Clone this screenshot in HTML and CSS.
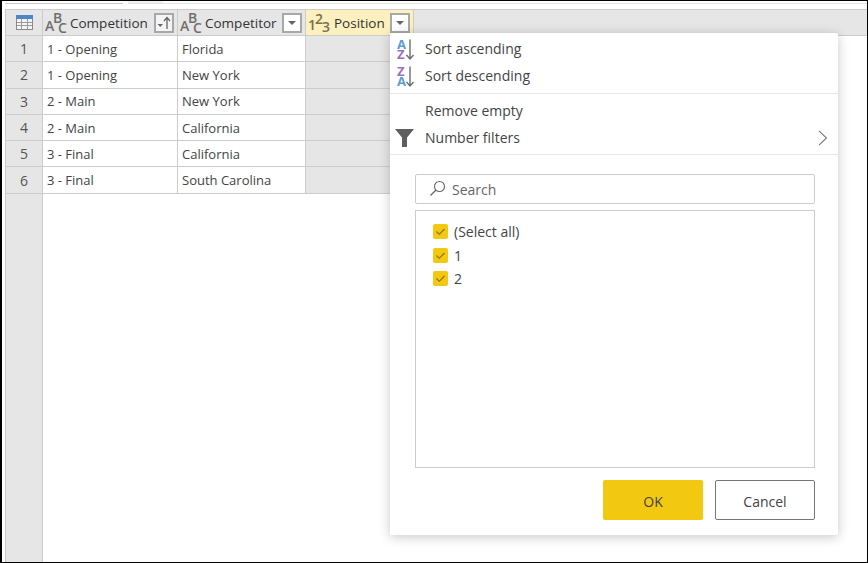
FILE: index.html
```html
<!DOCTYPE html>
<html lang="en">
  <head>
    <meta charset="UTF-8" />
    <meta name="viewport" content="width=device-width, initial-scale=1.0" />
    <title>Filter Position</title>
    <link rel="stylesheet" href="styles.css">
  </head>
  <body>
    <div class="frame">
      <div class="tabs">
        <div class="tab tab-first"></div>
        <div class="tab tab-rest"><div class="tab-fill"></div></div>
      </div>
      <div class="sheet">
        <div class="gutter">
          <div class="corner">
            <svg width="17" height="15" viewBox="0 0 17 15">
              <rect x="0.5" y="0.5" width="16" height="14" fill="#f4f4f4" stroke="#8a8a8a"/>
              <rect x="0" y="0" width="17" height="4" fill="#4a86c8"/>
              <path d="M1 7.5H16M1 10.5H16M5.5 4V14M11.5 4V14" stroke="#9a9a9a" fill="none"/>
            </svg>
          </div>
          <div class="num">1</div>
          <div class="num">2</div>
          <div class="num">3</div>
          <div class="num">4</div>
          <div class="num">5</div>
          <div class="num">6</div>
        </div>
        <div class="data">
          <div class="head">
            <div class="hcell col-a">
              <svg class="type-icon" width="22" height="24" viewBox="0 0 22 24">
                <text x="0" y="20" class="glyph">A</text>
                <text x="8" y="12" class="glyph">B</text>
                <text x="13" y="22" class="glyph">C</text>
              </svg>
              <span class="hname">Competition</span>
              <button class="hbtn hbtn-a">
                <svg width="16" height="16" viewBox="0 0 16 16">
                  <path d="M1.5 9H7L4.25 12Z" fill="#666"/>
                  <path d="M11 14V3M8 6L11 2.5L14 6" stroke="#666" stroke-width="1.3" fill="none"/>
                </svg>
              </button>
            </div>
            <div class="hcell col-b">
              <svg class="type-icon" width="22" height="24" viewBox="0 0 22 24">
                <text x="0" y="20" class="glyph">A</text>
                <text x="8" y="12" class="glyph">B</text>
                <text x="13" y="22" class="glyph">C</text>
              </svg>
              <span class="hname">Competitor</span>
              <button class="hbtn"><span class="caret"></span></button>
            </div>
            <div class="hcell col-c">
              <svg class="type-icon" width="23" height="24" viewBox="0 0 23 24">
                <text x="0" y="19" class="glyph num-glyph">1</text>
                <text x="7" y="13" class="glyph num-glyph">2</text>
                <text x="14" y="21" class="glyph num-glyph">3</text>
              </svg>
              <span class="hname">Position</span>
              <button class="hbtn hbtn-active"><span class="caret"></span></button>
            </div>
          </div>
          <div class="row"><div class="cell col-a">1 - Opening</div><div class="cell col-b">Florida</div><div class="cell col-c"></div></div>
          <div class="row"><div class="cell col-a">1 - Opening</div><div class="cell col-b">New York</div><div class="cell col-c"></div></div>
          <div class="row"><div class="cell col-a">2 - Main</div><div class="cell col-b">New York</div><div class="cell col-c"></div></div>
          <div class="row"><div class="cell col-a">2 - Main</div><div class="cell col-b">California</div><div class="cell col-c"></div></div>
          <div class="row"><div class="cell col-a">3 - Final</div><div class="cell col-b">California</div><div class="cell col-c"></div></div>
          <div class="row"><div class="cell col-a">3 - Final</div><div class="cell col-b">South Carolina</div><div class="cell col-c"></div></div>
        </div>
      </div>

      <div class="popup">
        <div class="menu-group menu-group-top">
          <div class="menu-item">
            <svg class="menu-icon" width="24" height="24" viewBox="0 0 24 24">
              <text x="5" y="11.5" class="sort-letter blue">A</text>
              <text x="5" y="21.5" class="sort-letter purple">Z</text>
              <path d="M18 2.5V21.5M14.5 18L18 22L21.5 18" stroke="#6e6e6e" stroke-width="1.4" fill="none"/>
            </svg>
            <span>Sort ascending</span>
          </div>
          <div class="menu-item">
            <svg class="menu-icon" width="24" height="24" viewBox="0 0 24 24">
              <text x="5" y="11.5" class="sort-letter purple">Z</text>
              <text x="5" y="21.5" class="sort-letter blue">A</text>
              <path d="M18 2.5V21.5M14.5 18L18 22L21.5 18" stroke="#6e6e6e" stroke-width="1.4" fill="none"/>
            </svg>
            <span>Sort descending</span>
          </div>
        </div>
        <div class="menu-group">
          <div class="menu-item"><span class="menu-icon"></span><span>Remove empty</span></div>
          <div class="menu-item">
            <svg class="menu-icon" width="24" height="24" viewBox="0 0 24 24">
              <path d="M3 3H22L15 11.5V21H10V11.5Z" fill="#5f5f5f"/>
            </svg>
            <span>Number filters</span>
            <svg class="chevron" width="10" height="16" viewBox="0 0 10 16">
              <path d="M1 0.8L8.5 8L1 15.2" stroke="#777" stroke-width="1.1" fill="none"/>
            </svg>
          </div>
        </div>
        <div class="filter">
          <div class="search">
            <svg width="18" height="18" viewBox="0 0 18 18">
              <circle cx="10.5" cy="6.5" r="5" stroke="#666" stroke-width="1.1" fill="none"/>
              <path d="M7 10L1.5 15.5" stroke="#666" stroke-width="1.2"/>
            </svg>
            <span>Search</span>
          </div>
          <div class="values">
            <label class="value"><span class="check"><svg width="15" height="15" viewBox="0 0 15 15"><path d="M3.5 7.5L6.3 10.3L11.5 5" stroke="#8a6d10" stroke-width="1.1" fill="none"/></svg></span>(Select all)</label>
            <label class="value"><span class="check"><svg width="15" height="15" viewBox="0 0 15 15"><path d="M3.5 7.5L6.3 10.3L11.5 5" stroke="#8a6d10" stroke-width="1.1" fill="none"/></svg></span>1</label>
            <label class="value"><span class="check"><svg width="15" height="15" viewBox="0 0 15 15"><path d="M3.5 7.5L6.3 10.3L11.5 5" stroke="#8a6d10" stroke-width="1.1" fill="none"/></svg></span>2</label>
          </div>
          <div class="actions">
            <button class="btn btn-ok">OK</button>
            <button class="btn btn-cancel">Cancel</button>
          </div>
        </div>
      </div>
    </div>
  </body>
</html>
```

FILE: styles.css
```css
* {
  margin: 0;
  padding: 0;
  box-sizing: border-box;
}
body {
  font-family: "Open Sans", "Liberation Sans", sans-serif;
  font-size: 13px;
  color: #444;
  background-color: #fff;
}
.frame {
  position: relative;
  width: 868px;
  height: 563px;
  border-style: solid;
  border-color: #000;
  border-width: 1px 1px 1px 2px;
  display: flex;
  flex-direction: column;
  overflow: hidden;
}
.tabs {
  display: flex;
  gap: 5px;
  height: 3px;
  padding-left: 3px;
  flex-shrink: 0;
}
.tab {
  border-bottom: 1px solid #c8c8c8;
}
.tab-first {
  width: 118px;
}
.tab-rest {
  flex: 1;
  border-bottom-color: #e2e2e2;
}
.tab-fill {
  width: 35px;
  height: 2px;
  background-color: #f0f0f0;
}

.sheet {
  display: flex;
  flex: 1;
  margin-top: 5px;
  margin-left: 3px;
}
.gutter {
  width: 38px;
  background-color: #e6e6e6;
  border-left: 1px solid #ccc;
  border-right: 1px solid #ccc;
  border-top: 1px solid #ccc;
  flex-shrink: 0;
}
.corner {
  height: 26px;
  display: flex;
  align-items: center;
  justify-content: center;
  border-bottom: 1px solid #ccc;
}
.num {
  height: 26.3px;
  display: flex;
  align-items: center;
  justify-content: center;
  border-bottom: 1px solid #ccc;
  font-size: 14px;
  color: #555;
}
.data {
  flex: 1;
}
.head {
  display: flex;
  height: 27px;
  background-color: #e6e6e6;
  border-top: 1px solid #ccc;
  border-bottom: 1px solid #ccc;
}
.hcell {
  display: flex;
  align-items: center;
  border-right: 1px solid #ccc;
  padding-left: 2px;
  padding-right: 3px;
}
.hname {
  flex: 1;
  font-size: 13.5px;
  color: #333;
  padding-left: 3px;
}
.col-a {
  width: 135px;
}
.col-b {
  width: 128px;
}
.col-c {
  width: 108px;
}
.head .col-c {
  background-color: #fcf0bf;
}
.type-icon {
  flex-shrink: 0;
  overflow: visible;
}
.glyph {
  font-family: "Open Sans", sans-serif;
  font-size: 14px;
  font-weight: 600;
  fill: #707070;
}
.num-glyph {
  fill: #77704f;
}
.hbtn {
  width: 20px;
  height: 20px;
  background-color: #fff;
  border: 2px solid #a8a8a8;
  display: flex;
  align-items: center;
  justify-content: center;
}
.hbtn-a {
  background-color: #f4f4f4;
}
.caret {
  width: 0;
  height: 0;
  border-left: 4px solid transparent;
  border-right: 4px solid transparent;
  border-top: 4px solid #666;
}
.row {
  display: flex;
  height: 26.3px;
}
.cell {
  display: flex;
  align-items: center;
  padding-left: 4px;
  border-right: 1px solid #ccc;
  border-bottom: 1px solid #ccc;
}
.row .col-c {
  background-color: #e6e6e6;
  border-right: none;
}

.popup {
  position: absolute;
  left: 388px;
  top: 32px;
  width: 448px;
  height: 502px;
  background-color: #fff;
  border-radius: 2px;
  box-shadow: 0 2px 12px rgba(0, 0, 0, 0.22);
  display: flex;
  flex-direction: column;
  font-size: 14px;
}
.menu-group {
  padding: 3px 0;
  border-bottom: 1px solid #e6e6e6;
}
.menu-group-top {
  padding: 2px 0 4px;
}
.menu-item {
  display: flex;
  align-items: center;
  height: 27px;
  padding-left: 2px;
  padding-right: 10px;
}
.menu-item span:last-of-type {
  flex: 1;
}
.menu-icon {
  width: 24px;
  height: 24px;
  margin-right: 9px;
  flex-shrink: 0;
  overflow: visible;
}
.sort-letter {
  font-family: "Open Sans", sans-serif;
  font-size: 13px;
  font-weight: 700;
}
.blue {
  fill: #5b9bd5;
}
.purple {
  fill: #9b6fc4;
}
.filter {
  flex: 1;
  display: flex;
  flex-direction: column;
  padding: 19px 23px 15px 25px;
}
.search {
  display: flex;
  align-items: center;
  gap: 5px;
  height: 30px;
  padding-left: 13px;
  border: 1px solid #ccc;
  border-radius: 2px;
  color: #666;
}
.values {
  height: 258px;
  margin-top: 6px;
  padding: 9px 17px;
  border: 1px solid #ccc;
}
.value {
  display: flex;
  align-items: center;
  gap: 6px;
  height: 23.5px;
}
.check {
  width: 15px;
  height: 15px;
  background-color: #f2c811;
  border-radius: 2px;
  display: flex;
}
.actions {
  display: flex;
  justify-content: flex-end;
  gap: 12px;
  margin-top: 12px;
}
.btn {
  width: 100px;
  height: 40px;
  padding-top: 2px;
  border-radius: 2px;
  font-family: inherit;
  font-size: 14px;
  color: #444;
}
.btn-ok {
  background-color: #f2c811;
  border: none;
}
.btn-cancel {
  background-color: #fff;
  border: 1px solid #777;
}
```
